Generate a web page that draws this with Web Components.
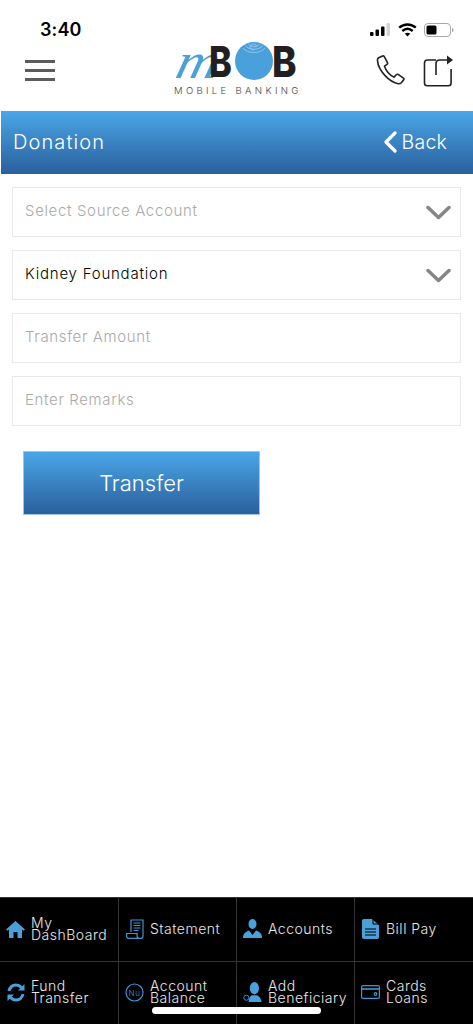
<!DOCTYPE html>
<html><head><meta charset="utf-8"><style>
html,body{margin:0;padding:0;background:#fff}
body{width:473px;height:1024px;overflow:hidden;font-family:Inter,"Liberation Sans",sans-serif;display:flex;flex-direction:column;position:relative}
</style></head><body>
<app-header></app-header>
<title-bar></title-bar>
<donation-form></donation-form>
<bottom-nav></bottom-nav>
<script>
function def(name,html,init){customElements.define(name,class extends HTMLElement{constructor(){super();this.attachShadow({mode:'open'}).innerHTML=html;}connectedCallback(){if(init)init(this)}});}
def('app-header',`<style>
:host{display:block;height:111px;flex:none;position:relative}
.st{height:44px;display:flex;justify-content:space-between;padding:12px 18px 0 40px;box-sizing:border-box}
.time{font:600 18px/36px Inter,"Liberation Sans",sans-serif;color:#000;height:36px;letter-spacing:.1px}
.sys{display:flex;align-items:flex-start;gap:7px;padding-top:11px}
.row{display:flex;align-items:center;justify-content:space-between;height:60px;margin-top:-5px;padding:0 20px 0 25px;position:relative}
.burger{width:30px;height:21px;display:flex;flex-direction:column;justify-content:space-between;margin-top:2px}
.burger i{display:block;height:3px;background:#5c5c5c}
.logo{position:absolute;left:173px;top:3px;width:128px;height:56px}
.m{font:italic 400 50px/40px "Liberation Serif",serif;color:#4aa0da;position:absolute;left:0;top:-1px;transform:skewX(-14deg) scaleX(1.16);transform-origin:left bottom}
.b{font:800 43px/40px Inter,"Liberation Sans",sans-serif;color:#231f20;position:absolute;top:-1px;transform:scaleX(.8);transform-origin:left}
.b2{transform:scaleX(.86)}
.circle{position:absolute;left:62px;top:0;width:38px;height:38px}
.sub{position:absolute;left:1px;top:43px;font:300 9.5px/12px Inter,"Liberation Sans",sans-serif;letter-spacing:3.35px;color:#444;white-space:nowrap}
.acts{display:flex;gap:15px;align-items:center;margin-top:3px}
</style>
<div class="st"><span class="time">3:40</span>
<div class="sys">
<svg width="21" height="13" viewBox="0 0 21 13"><rect x="0" y="9" width="3.5" height="4" rx="1" fill="#000"/><rect x="5.5" y="6.5" width="3.5" height="6.5" rx="1" fill="#000"/><rect x="11" y="3.5" width="3.5" height="9.5" rx="1" fill="#000"/><rect x="16.5" y="0" width="3.5" height="13" rx="1" fill="#d4d4d4"/></svg>
<svg width="19" height="14" viewBox="0 0 19 14" fill="none" stroke="#000" stroke-width="2.4"><path d="M1.2 4.7C6 .4 13 .4 17.8 4.7"/><path d="M4.3 8C7.5 5.2 11.5 5.2 14.7 8"/><path d="M9.5 13.6l-2.8-3C8.300 9.300 10.700 9.300 12.300 10.600z" fill="#000" stroke="none"/></svg>
<svg width="31" height="14" viewBox="0 0 31 14"><rect x=".5" y=".5" width="26" height="13" rx="3.500" fill="none" stroke="#a8a8a8"/><rect x="2.500" y="2.500" width="10" height="9" rx="1.500" fill="#000"/><path d="M28 5v4c1-.3 1.500-1.100 1.500-2S29 5.300 28 5z" fill="#a8a8a8"/></svg>
</div></div>
<div class="row">
<div class="burger"><i></i><i></i><i></i></div>
<div class="logo">
<span class="m">m</span><span class="b" style="left:36px">B</span>
<svg class="circle" viewBox="0 0 38 38"><circle cx="19" cy="19" r="19" fill="#4aa0da"/><g fill="none" stroke="#a9d2ee" stroke-width=".7"><path d="M8 6c4 6 18 6 22 0"/><path d="M10.500 3.500c3 5 14 5 17 0"/><path d="M13.500 2c2 3.500 9 3.500 11 0"/><path d="M19 8c-3.500 0-5-3-3-5s6-1 5 2"/></g></svg>
<span class="b b2" style="left:99px">B</span>
<div class="sub">MOBILE BANKING</div></div>
<div class="acts">
<svg width="34" height="34" viewBox="0 0 34 34" fill="none" stroke="#222" stroke-width="1.700" stroke-linejoin="round"><path d="M4.500 3.500l4-2c.8-.3 1.400 0 1.800.7l3.400 6.300c.4.800.2 1.400-.5 1.900l-2.700 1.900c1.500 4.500 5 9 10 11.500l2.400-2.500c.6-.6 1.300-.7 2-.3l5.500 3.800c.7.500.8 1.200.3 1.900l-2.500 3c-1 1-2.200 1.300-3.600 1-9-2-20.500-13-21.500-24.500-.1-1.100.4-1.900 1-2.700z" transform="translate(.5 .5) scale(.95)"/></svg>
<svg width="30" height="32" viewBox="0 0 30 32" fill="none" stroke="#222" stroke-width="1.600"><path d="M13 5H4.500C2.500 5 1.500 6 1.500 8v20c0 1.800 1 2.800 2.800 2.800h21c1.800 0 2.800-1 2.800-2.800V14"/><path d="M13 20V8.800C13 6.500 14 5 16.500 5H24"/><path d="M24 .5L30 5l-6 4.500z" fill="#222" stroke="none"/></svg>
</div></div>`);
def('title-bar',`<style>
:host{display:flex;flex:none;height:63px;margin-left:1px;align-items:center;justify-content:space-between;padding:0 26px 2px 12px;box-sizing:border-box;color:#fff;font:300 20px/24px Inter,"Liberation Sans",sans-serif;background:linear-gradient(#4aa6e8,#2a5f9c)}
.t{letter-spacing:1.1px}
.back{display:flex;align-items:center;gap:5px;font-size:19.5px;letter-spacing:.2px}
</style><span class="t">Donation</span><span class="back"><svg width="13" height="22" viewBox="0 0 13 22" fill="none" stroke="#fff" stroke-width="3.200" stroke-linecap="round" stroke-linejoin="round"><path d="M11 2L2 11l9 9"/></svg>Back</span>`);
def('field-box',`<style>
:host{display:flex;height:50px;box-sizing:border-box;border:1.500px solid #e9e9e9;align-items:center;justify-content:space-between;padding:0 9px 2px 12px;font:300 15px/20px Inter,"Liberation Sans",sans-serif;letter-spacing:.65px;color:#a9a9a9;margin-bottom:13px}
:host([val]){color:#000;font-weight:300;letter-spacing:.78px}
svg{display:none;margin-top:3px}
:host([sel]) svg{display:block}
</style><slot></slot><svg width="25" height="15" viewBox="0 0 25 15" fill="none" stroke="#868686" stroke-width="3.500" stroke-linecap="round" stroke-linejoin="round"><path d="M2 2.500l10.500 10L23 2.500"/></svg>`);
def('action-button',`<style>
:host{display:flex;width:237px;height:64px;box-sizing:border-box;margin:25px 0 0 11px;border:1px solid #9cc6ee;align-items:center;justify-content:center;color:#fff;font:300 22px/28px Inter,"Liberation Sans",sans-serif;background:linear-gradient(#4aa6e8,#2a5f9c)}
</style><slot></slot>`);
def('donation-form',`<style>
:host{display:block;flex:1;padding:13px 12px 0;box-sizing:border-box}
</style><field-box sel>Select Source Account</field-box><field-box sel val>Kidney Foundation</field-box><field-box>Transfer Amount</field-box><field-box>Enter Remarks</field-box><action-button>Transfer</action-button>`);
def('nav-item',`<style>
:host{display:flex;align-items:center;gap:6px;padding:0 0 2px 6px;box-sizing:border-box;border-right:1px solid #333;border-top:1px solid #333;color:#e8e8e8;font:300 14px/12px Inter,"Liberation Sans",sans-serif;letter-spacing:.5px;min-width:0;overflow:hidden}
.i{flex:none;width:19px;height:20px;display:flex;align-items:center;justify-content:center}
:host([last]){border-right:none}
</style><span class="i"><slot name="icon"></slot></span><span><slot></slot></span>`);
const icons={
home:`<svg slot="icon" width="19" height="18" viewBox="0 0 19 18"><path d="M9.500 1L0 9.500l1.300 1.300L3 9.400V18h4.500v-6h4v6H16V9.400l1.700 1.400L19 9.500z" fill="#4aa0da"/></svg>`,
stmt:`<svg slot="icon" width="18" height="20" viewBox="0 0 18 20" fill="none" stroke="#3f97d3" stroke-width="1.200"><path d="M5 13V1h12v16c0 1.500-1 2.400-2 2.400H3c-1.400 0-2.400-1-2.400-2.500V14.500h10.500V17c0 1.300 1 2.400 2.400 2.400"/><path d="M7.500 4h7M7.500 6.500h7M7.500 9h7M7.500 11.500h5"/></svg>`,
acc:`<svg slot="icon" width="19" height="19" viewBox="0 0 19 19"><ellipse cx="9.500" cy="5" rx="4" ry="5" fill="#4aa0da"/><path d="M0 19c0-4 2-6 6-7.500l3.500 4.500 3.500-4.500c4 1.500 6 3.500 6 7.500z" fill="#4aa0da"/></svg>`,
bill:`<svg slot="icon" width="17" height="20" viewBox="0 0 17 20"><path d="M0 2C0 .8.800 0 2 0h8l7 6v12c0 1.200-.8 2-2 2H2c-1.200 0-2-.8-2-2z" fill="#4aa0da"/><path d="M3 10h11M3 13h11M3 16h11" stroke="#000" stroke-width="1.200"/><path d="M11 0v5h6" fill="none" stroke="#000"/></svg>`,
fund:`<svg slot="icon" width="18" height="19" viewBox="0 0 18 19" fill="none" stroke="#4aa0da" stroke-width="3"><path d="M2 8c1-4 4-6 7-6 2 0 4 .8 5.500 2.500"/><path d="M16 11c-1 4-4 6-7 6-2 0-4-.8-5.500-2.500"/><path d="M17.500 1v6.500H11z" fill="#4aa0da" stroke="none"/><path d="M.5 18v-6.500H7z" fill="#4aa0da" stroke="none"/></svg>`,
nu:`<svg slot="icon" width="19" height="19" viewBox="0 0 19 19"><circle cx="9.500" cy="9.500" r="8.500" fill="none" stroke="#3f97d3" stroke-width="1.200"/><text x="9.500" y="12.500" text-anchor="middle" font-family="Inter,Liberation Sans,sans-serif" font-size="8" fill="#3f97d3">Nu</text></svg>`,
add:`<svg slot="icon" width="20" height="21" viewBox="0 0 20 21"><ellipse cx="12" cy="6" rx="4.800" ry="6.500" fill="#4aa0da"/><path d="M6 20.500c.2-3.500.8-5.500 3-7h6c2.500 1.500 4 3.500 4.500 7z" fill="#4aa0da"/><circle cx="3.500" cy="16" r="2.700" fill="#000" stroke="#3f97d3"/></svg>`,
card:`<svg slot="icon" width="19" height="14" viewBox="0 0 19 14" fill="none" stroke="#3f97d3" stroke-width="1.200"><rect x=".6" y=".6" width="17.800" height="12.800" rx="1.500"/><path d="M.6 4h17.800" stroke-width="1.600"/><circle cx="14.500" cy="9" r="1.300"/></svg>`};
def('bottom-nav',`<style>
:host{display:grid;flex:none;height:127px;background:#000;grid-template-columns:119px 118px 118px 1fr;grid-template-rows:64px 63px;position:relative}
.h{position:absolute;left:152px;top:110px;width:169px;height:7px;border-radius:4px;background:#fff}
</style>
<nav-item>${icons.home}My<br>DashBoard</nav-item>
<nav-item>${icons.stmt}Statement</nav-item>
<nav-item>${icons.acc}Accounts</nav-item>
<nav-item last>${icons.bill}Bill Pay</nav-item>
<nav-item>${icons.fund}Fund<br>Transfer</nav-item>
<nav-item>${icons.nu}Account<br>Balance</nav-item>
<nav-item>${icons.add}Add<br>Beneficiary</nav-item>
<nav-item last>${icons.card}Cards<br>Loans</nav-item>
<div class="h"></div>`);
</script>
</body></html>
